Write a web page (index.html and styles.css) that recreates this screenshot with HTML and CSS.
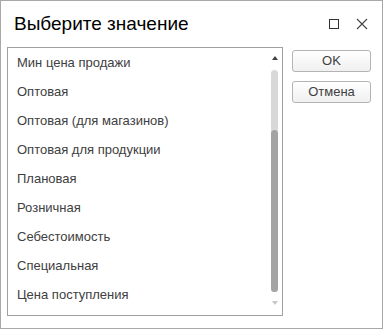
FILE: index.html
```html
<!DOCTYPE html>
<html>
<head>
<meta charset="utf-8">
<link rel="stylesheet" href="styles.css">
</head>
<body>
<div class="window">
  <div class="titlebar">
    <div class="title">Выберите значение</div>
    <div class="controls">
      <svg class="ctl" width="12" height="12" viewBox="0 0 12 12"><rect x="1.5" y="1.5" width="9" height="9" fill="none" stroke="#333" stroke-width="1"/></svg>
      <svg class="ctl" width="12" height="12" viewBox="0 0 12 12"><path d="M1 1 L11 11 M11 1 L1 11" stroke="#444" stroke-width="1.1"/></svg>
    </div>
  </div>
  <div class="body">
    <div class="list">
      <div class="items">
        <div class="item">Мин цена продажи</div>
        <div class="item">Оптовая</div>
        <div class="item">Оптовая (для магазинов)</div>
        <div class="item">Оптовая для продукции</div>
        <div class="item">Плановая</div>
        <div class="item">Розничная</div>
        <div class="item">Себестоимость</div>
        <div class="item">Специальная</div>
        <div class="item">Цена поступления</div>
      </div>
      <div class="scroll">
        <div class="arrow up"></div>
        <div class="track"><div class="thumb"></div></div>
        <div class="arrow down"></div>
      </div>
    </div>
    <div class="buttons">
      <div class="btn">OK</div>
      <div class="btn">Отмена</div>
    </div>
  </div>
</div>
</body>
</html>
```
FILE: styles.css
```css
html, body { margin: 0; padding: 0; background: #fff; }
body { font-family: Arial, "Liberation Sans", sans-serif; color: #333; }
.window {
  width: 383px;
  height: 329px;
  box-sizing: border-box;
  border: 1px solid #a8a8a8;
  background: #fff;
  display: flex;
  flex-direction: column;
}
.titlebar {
  display: flex;
  align-items: center;
  height: 45px;
  padding: 0 14px 0 13px;
}
.title {
  flex: 1;
  font-size: 19px;
  color: #000;
  padding-top: 1px;
}
.controls { display: flex; gap: 16px; align-items: center; padding-top: 1px; }
.ctl { display: block; }
.body {
  display: flex;
  padding: 1px 11px 0 6px;
  gap: 9px;
}
.list {
  width: 276px;
  height: 269px;
  box-sizing: border-box;
  border: 1px solid #a0a0a0;
  display: flex;
}
.items { flex: 1; padding-top: 0; }
.item {
  height: 29px;
  line-height: 29px;
  font-size: 13px;
  color: #404040;
  padding-left: 9px;
}
.scroll {
  width: 13px;
  display: flex;
  flex-direction: column;
  align-items: center;
  margin-right: 1px;
}
.arrow { width: 0; height: 0; border-left: 3px solid transparent; border-right: 3px solid transparent; }
.arrow.up { border-bottom: 4px solid #404040; margin-top: 8px; margin-bottom: 10px; }
.arrow.down { border-top: 4px solid #c8c8c8; margin-top: 9px; }
.track {
  width: 7px;
  height: 222px;
  background: #d8d8d8;
  border-radius: 4px;
  display: flex;
  flex-direction: column;
  justify-content: flex-end;
}
.thumb { height: 162px; background: #a4a4a4; border-radius: 4px; }
.buttons { display: flex; flex-direction: column; gap: 9px; padding-top: 3px; }
.btn {
  width: 79px;
  height: 22px;
  box-sizing: border-box;
  border: 1px solid #b4b4b4;
  border-radius: 3px;
  background: linear-gradient(#ffffff, #f0f0f0);
  text-align: center;
  font-size: 13px;
  line-height: 20px;
  color: #404040;
}
```
